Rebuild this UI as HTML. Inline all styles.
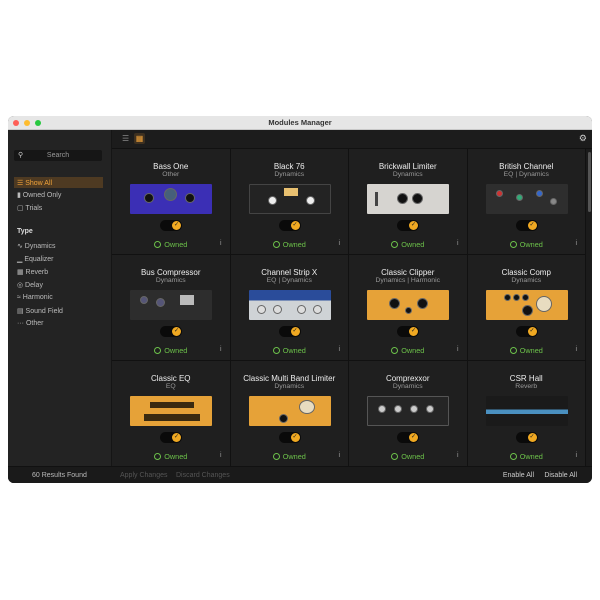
<!DOCTYPE html>
<html><head><style>
*{margin:0;padding:0;box-sizing:border-box}
body{width:600px;height:600px;background:#fff;font-family:"Liberation Sans",sans-serif;position:relative;overflow:hidden}
.win{position:absolute;left:8px;top:116px;width:584px;height:367px;border-radius:6px;overflow:hidden;background:#1b1b1b}
.tb{height:14px;background:#e6e6e6;border-bottom:1px solid #c8c8c8;position:relative;text-align:center;font-size:7.5px;font-weight:bold;color:#333;line-height:14px}
.dot{position:absolute;top:4px;width:6px;height:6px;border-radius:50%}
.side{position:absolute;left:0;top:14px;width:104px;height:353px;background:#232323;border-right:1px solid #151515}
.s{position:absolute;font-size:7px;color:#bbb}
.search{position:absolute;left:6px;top:20px;width:88px;height:11px;background:#161616;border-radius:2px;color:#999;font-size:7px;line-height:11px;text-align:center}
.main{position:absolute;left:104px;top:14px;right:0;height:353px}
.tool{height:19px;background:#1c1c1c;border-bottom:1px solid #111;position:relative}
.grid{position:absolute;left:0;top:19px;width:476px;display:grid;grid-template-columns:repeat(4,118.5px);grid-auto-rows:106px}
.c{border-right:1px solid #111;border-bottom:1px solid #111;background:#1f1f1f;position:relative;text-align:center}
.n{position:absolute;top:13px;left:0;right:0;font-size:8px;color:#eee}
.sub{position:absolute;top:22px;left:0;right:0;font-size:6.8px;color:#999}
.img{position:absolute;top:35px;left:18px;width:82px;height:30px;border-radius:1px}
.k{position:absolute;border-radius:50%;background:#111;border:1px solid #666}
.tg{position:absolute;top:71px;left:48px;width:22px;height:11px;border-radius:6px;background:#0a0a0a}
.tg i{position:absolute;right:1px;top:1px;width:9px;height:9px;border-radius:50%;background:#f0a922;font-style:normal;font-size:6px;color:#222;line-height:9px;text-align:center}
.o{position:absolute;top:91px;left:0;right:0;font-size:7.3px;color:#6cc14a}
.o b{display:inline-block;width:7px;height:7px;border:1px solid #6cc14a;border-radius:50%;vertical-align:-1px;margin-right:3px}
.inf{position:absolute;right:8px;top:91px;font-size:7px;color:#999}
.foot{position:absolute;left:0;right:0;bottom:0;height:17px;background:#1a1a1a;border-top:1px solid #111;font-size:7px;line-height:17px}
</style></head><body>
<div class="win">
<div class="tb"><span class="dot" style="left:5px;background:#fe5f57"></span><span class="dot" style="left:16px;background:#febc2e"></span><span class="dot" style="left:27px;background:#28c840"></span>Modules Manager</div>
<div class="side">
<div class="search"><span style="position:absolute;left:4px;color:#ccc">&#9906;</span>Search</div>
<div style="position:absolute;left:6px;top:47px;width:89px;height:11px;background:#4e3a22"></div>
<div class="s" style="left:9px;top:49px;color:#f0a33a">&#9776; Show All</div>
<div class="s" style="left:9px;top:61px">&#9646; Owned Only</div>
<div class="s" style="left:9px;top:74px">&#9634; Trials</div>
<div class="s" style="left:9px;top:98px;color:#ddd;font-weight:bold">Type</div>
<div class="s" style="left:9px;top:112px">&#8767; Dynamics</div>
<div class="s" style="left:9px;top:125px">&#9601; Equalizer</div>
<div class="s" style="left:9px;top:138px">&#9638; Reverb</div>
<div class="s" style="left:9px;top:151px">&#9678; Delay</div>
<div class="s" style="left:9px;top:164px">&#8776; Harmonic</div>
<div class="s" style="left:9px;top:177px">&#9636; Sound Field</div>
<div class="s" style="left:9px;top:190px">&middot;&middot;&middot; Other</div>
</div>
<div class="main">
<div class="tool"><span style="position:absolute;left:10px;top:4px;color:#888;font-size:8px">&#9776;</span><span style="position:absolute;left:22px;top:3px;width:11px;height:11px;background:#3d3020;border-radius:2px;color:#f0a33a;font-size:8px;line-height:11px;text-align:center">&#9638;</span><span style="position:absolute;right:5px;top:3px;color:#ccc;font-size:9px">&#9881;</span></div>
<div class="grid">
<div class="c"><div class="n">Bass One</div><div class="sub">Other</div><div class="img" style="background:#3b2fb5"><span class="k" style="left:14px;top:9px;width:10px;height:10px"></span><span class="k" style="left:34px;top:4px;width:13px;height:13px;background:#46607a"></span><span class="k" style="left:55px;top:9px;width:10px;height:10px"></span></div><div class="tg"><i>✓</i></div><div class="o"><b></b>Owned</div><div class="inf">i</div></div>
<div class="c"><div class="n">Black 76</div><div class="sub">Dynamics</div><div class="img" style="background:#232323;border:1px solid #444"><span style="position:absolute;left:34px;top:3px;width:14px;height:8px;background:#e8c070"></span><span class="k" style="left:18px;top:11px;width:9px;height:9px;background:#eee"></span><span class="k" style="left:56px;top:11px;width:9px;height:9px;background:#eee"></span></div><div class="tg"><i>✓</i></div><div class="o"><b></b>Owned</div><div class="inf">i</div></div>
<div class="c"><div class="n">Brickwall Limiter</div><div class="sub">Dynamics</div><div class="img" style="background:#d6d4d0"><span class="k" style="left:30px;top:9px;width:11px;height:11px"></span><span class="k" style="left:45px;top:9px;width:11px;height:11px"></span><span style="position:absolute;left:8px;top:8px;width:3px;height:14px;background:#444"></span></div><div class="tg"><i>✓</i></div><div class="o"><b></b>Owned</div><div class="inf">i</div></div>
<div class="c"><div class="n">British Channel</div><div class="sub">EQ | Dynamics</div><div class="img" style="background:#2e2e2e"><span class="k" style="left:10px;top:6px;width:7px;height:7px;background:#c33"></span><span class="k" style="left:30px;top:10px;width:7px;height:7px;background:#3a7"></span><span class="k" style="left:50px;top:6px;width:7px;height:7px;background:#36c"></span><span class="k" style="left:64px;top:14px;width:7px;height:7px;background:#888"></span></div><div class="tg"><i>✓</i></div><div class="o"><b></b>Owned</div><div class="inf">i</div></div>
<div class="c"><div class="n">Bus Compressor</div><div class="sub">Dynamics</div><div class="img" style="background:#2d2d2d"><span class="k" style="left:10px;top:6px;width:8px;height:8px;background:#557"></span><span class="k" style="left:26px;top:8px;width:9px;height:9px;background:#557"></span><span style="position:absolute;left:50px;top:5px;width:14px;height:10px;background:#bbb"></span></div><div class="tg"><i>✓</i></div><div class="o"><b></b>Owned</div><div class="inf">i</div></div>
<div class="c"><div class="n">Channel Strip X</div><div class="sub">EQ | Dynamics</div><div class="img" style="background:linear-gradient(#2a4c9a 0 35%,#cfd3d6 35%)"><span class="k" style="left:8px;top:15px;width:9px;height:9px;background:#ddd"></span><span class="k" style="left:24px;top:15px;width:9px;height:9px;background:#ddd"></span><span class="k" style="left:48px;top:15px;width:9px;height:9px;background:#ddd"></span><span class="k" style="left:64px;top:15px;width:9px;height:9px;background:#ddd"></span></div><div class="tg"><i>✓</i></div><div class="o"><b></b>Owned</div><div class="inf">i</div></div>
<div class="c"><div class="n">Classic Clipper</div><div class="sub">Dynamics | Harmonic</div><div class="img" style="background:#e6a238"><span class="k" style="left:22px;top:8px;width:11px;height:11px"></span><span class="k" style="left:50px;top:8px;width:11px;height:11px"></span><span class="k" style="left:38px;top:17px;width:7px;height:7px"></span></div><div class="tg"><i>✓</i></div><div class="o"><b></b>Owned</div><div class="inf">i</div></div>
<div class="c"><div class="n">Classic Comp</div><div class="sub">Dynamics</div><div class="img" style="background:#e6a238"><span class="k" style="left:18px;top:4px;width:7px;height:7px"></span><span class="k" style="left:27px;top:4px;width:7px;height:7px"></span><span class="k" style="left:36px;top:4px;width:7px;height:7px"></span><span class="k" style="left:36px;top:15px;width:11px;height:11px"></span><span class="k" style="left:50px;top:6px;width:16px;height:16px;background:#e8dcc0"></span></div><div class="tg"><i>✓</i></div><div class="o"><b></b>Owned</div><div class="inf">i</div></div>
<div class="c"><div class="n">Classic EQ</div><div class="sub">EQ</div><div class="img" style="background:#e6a238"><span style="position:absolute;left:20px;top:6px;width:44px;height:6px;background:#3a2a10"></span><span style="position:absolute;left:14px;top:18px;width:56px;height:7px;background:#3a2a10"></span></div><div class="tg"><i>✓</i></div><div class="o"><b></b>Owned</div><div class="inf">i</div></div>
<div class="c"><div class="n">Classic Multi Band Limiter</div><div class="sub">Dynamics</div><div class="img" style="background:#e6a238"><span class="k" style="left:50px;top:4px;width:16px;height:14px;background:#e8dcc0"></span><span class="k" style="left:30px;top:18px;width:9px;height:9px"></span></div><div class="tg"><i>✓</i></div><div class="o"><b></b>Owned</div><div class="inf">i</div></div>
<div class="c"><div class="n">Comprexxor</div><div class="sub">Dynamics</div><div class="img" style="background:#252525;border:1px solid #555"><span class="k" style="left:10px;top:8px;width:8px;height:8px;background:#ccc"></span><span class="k" style="left:26px;top:8px;width:8px;height:8px;background:#ccc"></span><span class="k" style="left:42px;top:8px;width:8px;height:8px;background:#ccc"></span><span class="k" style="left:58px;top:8px;width:8px;height:8px;background:#ccc"></span></div><div class="tg"><i>✓</i></div><div class="o"><b></b>Owned</div><div class="inf">i</div></div>
<div class="c"><div class="n">CSR Hall</div><div class="sub">Reverb</div><div class="img" style="background:linear-gradient(#1a1a1a 0 45%,#4a90c0 45% 60%,#1a1a1a 60%)"></div><div class="tg"><i>✓</i></div><div class="o"><b></b>Owned</div><div class="inf">i</div></div>
</div>
<div style="position:absolute;right:1px;top:22px;width:3px;height:60px;background:#555;border-radius:2px"></div>
</div>
<div class="foot"><span style="position:absolute;left:24px;color:#bbb">60 Results Found</span><span style="position:absolute;left:112px;color:#555">Apply Changes</span><span style="position:absolute;left:168px;color:#555">Discard Changes</span><span style="position:absolute;right:58px;color:#ccc">Enable All</span><span style="position:absolute;right:15px;color:#ccc">Disable All</span></div>
</div>
</body></html>
